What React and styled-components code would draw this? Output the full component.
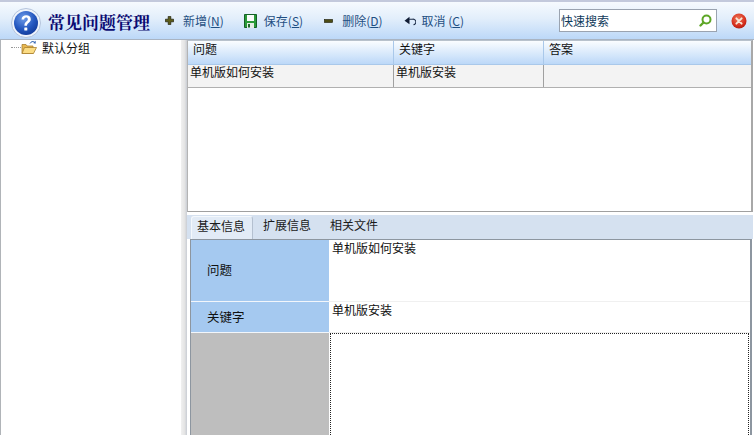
import React from 'react'
import styled, { createGlobalStyle } from 'styled-components'

const GlobalStyle = createGlobalStyle`
  html, body {
    margin: 0;
    padding: 0;
    height: 100%;
    overflow: hidden;
    background: #fff;
  }
  body {
    font-family: "Noto Sans CJK SC", "Liberation Sans", sans-serif;
    font-size: 12px;
    color: #111;
  }
`

const Page = styled.div`
  width: 754px;
  height: 435px;
  display: flex;
  flex-direction: column;
  overflow: hidden;
`

const Toolbar = styled.div`
  height: 37px;
  flex: none;
  display: flex;
  align-items: center;
  border-top: 2px solid #c3c9dc;
  border-bottom: 1px solid #a9b4c2;
  background: linear-gradient(#f6fafe, #e2eefb 45%, #bcd8f8);
  padding-left: 11px;
`

const HelpWrap = styled.div`
  display: flex;
  margin-top: 5px;
`

const Title = styled.h1`
  margin: 2px 15px 0 7px;
  font-size: 17px;
  line-height: 20px;
  font-weight: 700;
  color: #0a0a72;
  font-family: "Noto Serif CJK SC", "Noto Sans CJK SC", sans-serif;
  white-space: nowrap;
`

const ToolButton = styled.div`
  display: flex;
  align-items: center;
  gap: ${({ $gap }) => $gap}px;
  margin-right: ${({ $right }) => $right}px;
  color: #1f4f82;
  white-space: nowrap;
  u { text-underline-offset: 1px; }
`

const Search = styled.div`
  width: 158px;
  height: 23px;
  margin-left: auto;
  display: flex;
  align-items: center;
  justify-content: space-between;
  padding: 0 4px 0 1px;
  box-sizing: border-box;
  background: #fff;
  border: 1px solid #9aa3b0;
  color: #103a5a;
`

const CloseIcon = styled.div`
  display: flex;
  margin: 0 7px 0 14px;
`

const Body = styled.div`
  flex: 1;
  min-height: 0;
  display: flex;
`

const TreePanel = styled.div`
  width: 181px;
  flex: none;
  box-sizing: border-box;
  border-left: 1px solid #b0b4b8;
  padding: 0 0 0 10px;
`

const TreeNode = styled.div`
  display: flex;
  align-items: center;
  height: 20px;
  margin-top: -3px;
  &::before {
    content: "";
    width: 10px;
    border-top: 1px dotted #999;
  }
  span { margin-left: 5px; }
`

const Splitter = styled.div`
  width: 6px;
  flex: none;
  background: linear-gradient(90deg, #f0f0f0, #e4e4e4 60%, #c9cdd4);
`

const Main = styled.div`
  flex: 1;
  min-width: 0;
  display: flex;
  flex-direction: column;
  padding-right: 1px;
`

const GridBox = styled.div`
  height: 172px;
  flex: none;
  box-sizing: border-box;
  border: 1px solid #a0a0a0;
  border-top: 1px solid #b8c2cc;
  border-left: 1px solid #b4b4b4;
  border-right: 2px solid #a8a8a8;
  background: #fff;
`

const GridRow = styled.div`
  display: grid;
  grid-template-columns: 206px 150px 1fr;
  height: ${({ $head }) => ($head ? 24 : 23)}px;
  background: ${({ $head }) => ($head ? 'linear-gradient(#fafdff, #bcd8f8)' : '#f3f3f3')};
  border-bottom: 1px solid ${({ $head }) => ($head ? '#a9c8ea' : '#b0b0b0')};
  box-sizing: border-box;
`

const GridCell = styled.div`
  padding: ${({ $head }) => ($head ? '0 0 0 5px' : '0 0 0 2px')};
  line-height: ${({ $head }) => ($head ? 15 : 13)}px;
  border-right: 1px solid ${({ $head }) => ($head ? '#a9c8ea' : '#a0a0a0')};
  &:last-child { border-right: 0; }
`

const TabStrip = styled.div`
  margin-top: 3px;
  height: 24px;
  flex: none;
  display: flex;
  align-items: flex-end;
  padding-left: 4px;
  background: #d5e1f0;
  box-sizing: border-box;
`

const Tab = styled.div`
  width: ${({ $active }) => ($active ? 62 : 67)}px;
  height: 23px;
  box-sizing: border-box;
  padding-left: ${({ $active }) => ($active ? 5 : 10)}px;
  line-height: 18px;
  color: #1a1a1a;
  ${({ $active }) => $active && `
    background: #e2ebf6;
    border: 1px solid #f4f8fc;
    border-right-color: #b4c0d0;
    border-bottom: 0;
    border-radius: 3px 3px 0 0;
  `}
`

const FormPanel = styled.div`
  flex: 1;
  min-height: 0;
  margin: 0 1px 0 3px;
  border: 1px solid #8d96a0;
  border-bottom: 0;
  border-right-width: 2px;
  box-sizing: border-box;
  display: grid;
  grid-template-columns: 138px 1fr;
  grid-template-rows: 62px 31px 1fr;
  background: #fff;
`

const Label = styled.div`
  background: #a5c9f0;
  border-bottom: 1px solid #f2f6fb;
  padding: 0 0 2px 16px;
  display: flex;
  align-items: center;
  font-size: 12.5px;
`

const Value = styled.div`
  padding-left: 3px;
  line-height: 15px;
  border-bottom: 1px solid #f0f0f0;
`

const Filler = styled.div`
  background: #bebebe;
`

const EditArea = styled.div`
  margin: 0 1px;
  border: 1px dotted #222;
  border-bottom: 0;
  background: #fff;
`

const HelpIcon = () => (
  <svg width="30" height="30" viewBox="0 0 30 30">
    <defs>
      <radialGradient id="helpBall" cx="40%" cy="30%" r="75%">
        <stop offset="0" stopColor="#6f9ce8" />
        <stop offset="0.6" stopColor="#2558c0" />
        <stop offset="1" stopColor="#123a98" />
      </radialGradient>
    </defs>
    <circle cx="15" cy="15" r="14.5" fill="#eef3fb" stroke="#b4c4dc" />
    <circle cx="15" cy="15" r="12" fill="url(#helpBall)" />
    <path d="M10.5 11.5c.3-3 2.3-4.3 4.7-4.3 2.7 0 4.6 1.6 4.6 4 0 3.6-3.8 3.5-3.8 6.6h-2.6c-.2-4 3.4-4.3 3.4-6.5 0-1-.7-1.7-1.7-1.7-1.2 0-1.8.8-2 2z" fill="#fff" />
    <rect x="13.3" y="19.5" width="3" height="3" rx="0.5" fill="#fff" />
  </svg>
)

const PlusIcon = () => (
  <svg width="9" height="9" viewBox="0 0 9 9">
    <path d="M3.2.4h2.6v2.8h2.8v2.6H5.8v2.800H3.200V5.800H.4V3.200h2.800z" fill="#5c5c18" stroke="#1c1c08" strokeWidth="0.7" />
  </svg>
)

const SaveIcon = () => (
  <svg width="13" height="14" viewBox="0 0 13 14">
    <path d="M.5.5h12v13H.5z" fill="#2a9a38" stroke="#146026" />
    <rect x="3" y="1" width="7" height="6" fill="#fafcfa" />
    <rect x="3" y="9" width="7" height="5" fill="#e4ece4" />
    <rect x="4" y="10" width="2" height="3.5" fill="#1e6a2c" />
  </svg>
)

const MinusIcon = () => (
  <svg width="9" height="4" viewBox="0 0 9 4">
    <rect x="0.4" y="0.5" width="8.2" height="3" fill="#4c4c14" stroke="#1c1c08" strokeWidth="0.6" />
  </svg>
)

const UndoIcon = () => (
  <svg width="12" height="10" viewBox="0 0 12 10">
    <path d="M5.5.8.5 4.800l5 3.400z" fill="#101c34" />
    <path d="M5 3.200h3.500a2.800 2.800 0 0 1 1 5.600" fill="none" stroke="#1c2c48" strokeWidth="1.1" />
  </svg>
)

const SearchIcon = () => (
  <svg width="13" height="13" viewBox="0 0 13 13">
    <circle cx="7.5" cy="5.5" r="4" fill="none" stroke="#5da626" strokeWidth="2" />
    <path d="M4.5 8.5 1.500 11.500" stroke="#5da626" strokeWidth="2.4" strokeLinecap="round" />
  </svg>
)

const CloseRound = () => (
  <svg width="16" height="16" viewBox="0 0 17 17">
    <defs>
      <radialGradient id="closeBall" cx="45%" cy="35%" r="70%">
        <stop offset="0" stopColor="#f07a5a" />
        <stop offset="0.7" stopColor="#d42c1c" />
        <stop offset="1" stopColor="#a81c10" />
      </radialGradient>
    </defs>
    <circle cx="8.5" cy="8.5" r="8" fill="url(#closeBall)" />
    <path d="M5.7 5.700l5.600 5.600M11.300 5.700l-5.600 5.600" stroke="#f8e8d8" strokeWidth="2" strokeLinecap="round" />
  </svg>
)

const FolderIcon = () => (
  <svg width="16" height="15" viewBox="0 0 16 15">
    <path d="M1 4.5h4l1 1.500h6v7.500H1z" fill="#e8b850" stroke="#a98030" strokeWidth="0.8" />
    <path d="M3.5 7.500H15.500l-3 6H1z" fill="#fbdc84" stroke="#a98030" strokeWidth="0.8" />
    <path d="M9 3.5c1-2 3-2.500 4.500-1.500" fill="none" stroke="#2f62b0" strokeWidth="1" />
    <path d="M14.8.8l-.2 2.900-2.500-.8z" fill="#2f62b0" />
  </svg>
)

const tools = [
  { icon: <PlusIcon />, label: '新增', key: 'N', right: 20, gap: 9 },
  { icon: <SaveIcon />, label: '保存', key: 'S', right: 21, gap: 7 },
  { icon: <MinusIcon />, label: '删除', key: 'D', right: 21, gap: 9 },
  { icon: <UndoIcon />, label: '取消 ', key: 'C', right: 0, gap: 6 },
]

const App = () => {
  return (
    <Page>
      <GlobalStyle />
      <Toolbar>
        <HelpWrap><HelpIcon /></HelpWrap>
        <Title>常见问题管理</Title>
        {tools.map((t) => (
          <ToolButton key={t.key} $right={t.right} $gap={t.gap}>
            {t.icon}
            <span>{t.label}(<u>{t.key}</u>)</span>
          </ToolButton>
        ))}
        <Search>
          快速搜索
          <SearchIcon />
        </Search>
        <CloseIcon><CloseRound /></CloseIcon>
      </Toolbar>
      <Body>
        <TreePanel>
          <TreeNode>
            <FolderIcon />
            <span>默认分组</span>
          </TreeNode>
        </TreePanel>
        <Splitter />
        <Main>
          <GridBox>
            <GridRow $head>
              <GridCell $head>问题</GridCell>
              <GridCell $head>关键字</GridCell>
              <GridCell $head>答案</GridCell>
            </GridRow>
            <GridRow>
              <GridCell>单机版如何安装</GridCell>
              <GridCell>单机版安装</GridCell>
              <GridCell />
            </GridRow>
          </GridBox>
          <TabStrip>
            <Tab $active>基本信息</Tab>
            <Tab>扩展信息</Tab>
            <Tab>相关文件</Tab>
          </TabStrip>
          <FormPanel>
            <Label>问题</Label>
            <Value>单机版如何安装</Value>
            <Label>关键字</Label>
            <Value>单机版安装</Value>
            <Filler />
            <EditArea />
          </FormPanel>
        </Main>
      </Body>
    </Page>
  )
}

export default App
